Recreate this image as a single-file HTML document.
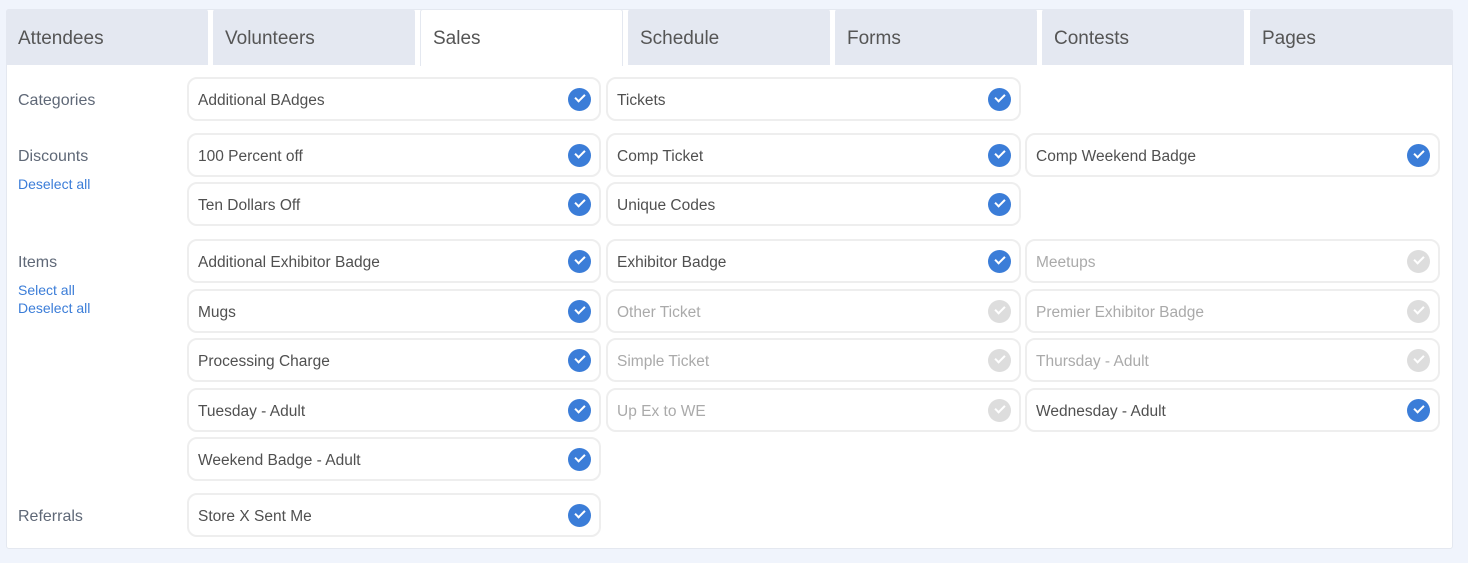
<!DOCTYPE html>
<html><head><meta charset="utf-8"><style>
*{box-sizing:border-box;margin:0;padding:0}
body{width:1468px;height:563px;background:#f0f4fc;font-family:"Liberation Sans",sans-serif;position:relative;overflow:hidden}
.panel{position:absolute;left:6px;top:9px;width:1447px;height:540px;background:#fff;border:1px solid #e4e8f0;border-radius:3px}
.tab{position:absolute;top:9px;height:56px;background:#e4e8f1;border-radius:3px 3px 0 0;font-size:19px;color:#555;padding:19px 0 0 12px}
.tab.a{background:#fff;border:1px solid #e4e8f0;border-bottom:none;height:57px;padding-top:18px}
.lbl{position:absolute;left:18px;font-size:16px;color:#5f6877;margin-top:2px}
.lnk{position:absolute;left:18px;font-size:14px;color:#3b7dd8}
.c{position:absolute;height:44px;border:2px solid #eeeeee;border-radius:10px;font-size:15.5px;color:#505050;padding:13px 0 0 9px;white-space:nowrap}
.c.d{color:#aaa}
.c i{position:absolute;right:8px;top:9px;width:23px;height:23px;border-radius:50%;background:#3b7dd8}
.c.d i{background:#ddd}
.c i:after{content:"";position:absolute;left:7px;top:6px;width:8px;height:4px;border-left:2.5px solid #fff;border-bottom:2.5px solid #fff;transform:rotate(-45deg)}
</style></head><body>
<div class="panel"></div>
<div class="tab" style="left:6px;width:202px">Attendees</div>
<div class="tab" style="left:213px;width:202px">Volunteers</div>
<div class="tab a" style="left:420px;width:203px">Sales</div>
<div class="tab" style="left:628px;width:202px">Schedule</div>
<div class="tab" style="left:835px;width:202px">Forms</div>
<div class="tab" style="left:1042px;width:202px">Contests</div>
<div class="tab" style="left:1250px;width:203px">Pages</div>

<div class="lbl" style="top:90px">Categories</div>
<div class="lbl" style="top:146px">Discounts</div>
<div class="lnk" style="top:176px">Deselect all</div>
<div class="lbl" style="top:252px">Items</div>
<div class="lnk" style="top:282px">Select all</div>
<div class="lnk" style="top:300px">Deselect all</div>
<div class="lbl" style="top:506px">Referrals</div>

<div class="c" style="left:187px;top:77px;width:414px">Additional BAdges<i></i></div>
<div class="c" style="left:606px;top:77px;width:415px">Tickets<i></i></div>

<div class="c" style="left:187px;top:133px;width:414px">100 Percent off<i></i></div>
<div class="c" style="left:606px;top:133px;width:415px">Comp Ticket<i></i></div>
<div class="c" style="left:1025px;top:133px;width:415px">Comp Weekend Badge<i></i></div>
<div class="c" style="left:187px;top:182px;width:414px">Ten Dollars Off<i></i></div>
<div class="c" style="left:606px;top:182px;width:415px">Unique Codes<i></i></div>

<div class="c" style="left:187px;top:239px;width:414px">Additional Exhibitor Badge<i></i></div>
<div class="c" style="left:606px;top:239px;width:415px">Exhibitor Badge<i></i></div>
<div class="c d" style="left:1025px;top:239px;width:415px">Meetups<i></i></div>
<div class="c" style="left:187px;top:289px;width:414px">Mugs<i></i></div>
<div class="c d" style="left:606px;top:289px;width:415px">Other Ticket<i></i></div>
<div class="c d" style="left:1025px;top:289px;width:415px">Premier Exhibitor Badge<i></i></div>
<div class="c" style="left:187px;top:338px;width:414px">Processing Charge<i></i></div>
<div class="c d" style="left:606px;top:338px;width:415px">Simple Ticket<i></i></div>
<div class="c d" style="left:1025px;top:338px;width:415px">Thursday - Adult<i></i></div>
<div class="c" style="left:187px;top:388px;width:414px">Tuesday - Adult<i></i></div>
<div class="c d" style="left:606px;top:388px;width:415px">Up Ex to WE<i></i></div>
<div class="c" style="left:1025px;top:388px;width:415px">Wednesday - Adult<i></i></div>
<div class="c" style="left:187px;top:437px;width:414px">Weekend Badge - Adult<i></i></div>

<div class="c" style="left:187px;top:493px;width:414px">Store X Sent Me<i></i></div>
</body></html>
